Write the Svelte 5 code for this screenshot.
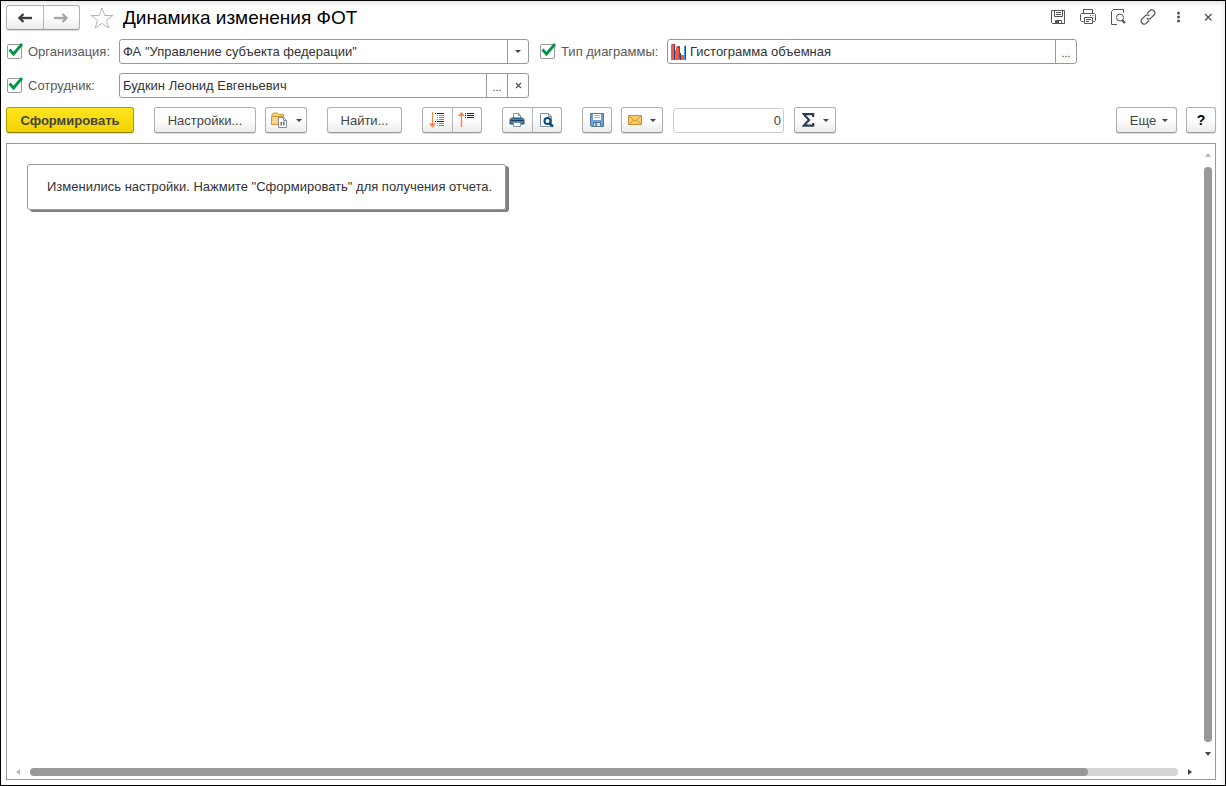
<script lang="ts">
  let useOrganization = $state(true);
  let useEmployee = $state(true);
  let useChartType = $state(true);

  let organization = $state('ФА "Управление субъекта федерации"');
  let employee = $state("Будкин Леонид Евгеньевич");
  let chartType = $state("Гистограмма объемная");
  let total = $state("0");
</script>

{#snippet tick()}
  <svg class="tick" width="17" height="16" viewBox="0 0 17 16" aria-hidden="true">
    <path d="M2.500 6.500 L6.500 11 L15 1" fill="none" stroke="#009646" stroke-width="2.8" />
  </svg>
{/snippet}

{#snippet caret()}
  <svg class="caret" width="6" height="3" viewBox="0 0 6 3" aria-hidden="true">
    <path d="M0 0h6L3 3z" fill="#444" />
  </svg>
{/snippet}

<div class="window">
  <header class="title-bar">
    <div class="group nav">
      <button aria-label="Назад">
        <svg width="14" height="10" viewBox="0 0 14 10">
          <path d="M14 5H3" stroke="#404040" stroke-width="2.4" />
          <path d="M5.500 1L1.500 5l4 4" fill="none" stroke="#404040" stroke-width="2.400" />
        </svg>
      </button>
      <button aria-label="Вперед">
        <svg width="14" height="10" viewBox="0 0 14 10">
          <path d="M0 5h11" stroke="#a6a6a6" stroke-width="2.4" />
          <path d="M8.500 1l4 4-4 4" fill="none" stroke="#a6a6a6" stroke-width="2.400" />
        </svg>
      </button>
    </div>
    <button class="plain star" aria-label="В избранное">
      <svg width="24" height="22" viewBox="0 0 24 22">
        <path d="M12 1l2.700 7.500H23l-6.600 4.900 2.500 7.700L12 16.400l-6.900 4.700 2.500-7.700L1 8.500h8.300z" fill="#fff" stroke="#b0b6ba" />
      </svg>
    </button>
    <h1>Динамика изменения ФОТ</h1>
    <div class="window-tools">
      <button class="plain" aria-label="Сохранить">
        <svg width="16" height="16" viewBox="0 0 16 16" fill="none" stroke="#555">
          <path d="M1.500 1.500h13v13h-12l-1-1z" />
          <path d="M4.500 1.500v6h8v-6M6 3.500h5M6 5.500h5M5.500 14.500v-3h6v3" />
          <path d="M6 12h3v2H6z" fill="#555" stroke="none" />
        </svg>
      </button>
      <button class="plain" aria-label="Печать">
        <svg width="16" height="16" viewBox="0 0 16 16" fill="none" stroke="#555">
          <path d="M3.500 4.500v-4h9v4M3.500 12.500h-2l-1-1v-6l1-1h13l1 1v6l-1 1h-2" />
          <path d="M4.500 8.500h8v6h-8zM6 10.500h5M6 12.500h3M10 6.500h1M12.500 6.500h1" />
        </svg>
      </button>
      <button class="plain" aria-label="Предварительный просмотр">
        <svg width="16" height="16" viewBox="0 0 16 16" fill="none" stroke="#555">
          <path d="M13.500 4V.5h-10l-2 2v13H7" />
          <circle cx="10" cy="8.500" r="3.500" />
          <path d="M12 11l3 3" stroke-width="2.4" />
        </svg>
      </button>
      <button class="plain" aria-label="Получить ссылку">
        <svg width="16" height="16" viewBox="0 0 16 16" fill="none" stroke="#555" stroke-width="1.2">
          <path d="M7 4.500l2.600-2.600a2.900 2.900 0 0 1 4.400 4.100l-3.200 3.200a2.900 2.900 0 0 1-4.100 0" />
          <path d="M9 11.500l-2.600 2.600a2.900 2.900 0 0 1-4.400-4.100l3.200-3.200a2.900 2.900 0 0 1 4.100 0" />
        </svg>
      </button>
      <button class="plain" aria-label="Действия">
        <svg width="16" height="16" viewBox="0 0 16 16" fill="#555">
          <circle cx="8.500" cy="4" r="1.500" />
          <circle cx="8.500" cy="8" r="1.500" />
          <circle cx="8.500" cy="12" r="1.500" />
        </svg>
      </button>
      <button class="plain" aria-label="Закрыть">
        <svg width="16" height="16" viewBox="0 0 16 16">
          <path d="M5 5l6.500 6.500M11.500 5L5 11.500" stroke="#444" stroke-width="1.1" />
        </svg>
      </button>
    </div>
  </header>

  <section class="filters">
    <div class="caption">
      <span class="check">
        <input id="use-org" type="checkbox" bind:checked={useOrganization} />
        {#if useOrganization}{@render tick()}{/if}
      </span>
      <label for="use-org">Организация:</label>
    </div>
    <div class="field">
      <input type="text" aria-label="Организация" bind:value={organization} />
      <button aria-label="Выбрать из списка">{@render caret()}</button>
    </div>

    <div class="caption second">
      <span class="check">
        <input id="use-chart" type="checkbox" bind:checked={useChartType} />
        {#if useChartType}{@render tick()}{/if}
      </span>
      <label for="use-chart">Тип диаграммы:</label>
    </div>
    <div class="field">
      <svg class="chart-icon" width="16" height="16" viewBox="0 0 16 16" aria-hidden="true">
        <path d="M0 1h3v15H0zM5 4h3v12H5zM10 11h3v5h-3z" fill="#f5564a" />
        <path d="M0 1l1-1h3v1zM5 4l1-2h3v2z" fill="#d23a34" />
        <path d="M8 3h1v12l-1 1z" fill="#b92a25" />
        <path d="M3 1h1v15H3zM9 9h1v7H9z" fill="#1c4c76" />
        <path d="M4 6h1v10H4zM13 2h2v14h-2z" fill="#4d9bd0" />
        <path d="M15 1v14l-1 1V2z" fill="#1c4c76" />
      </svg>
      <input type="text" aria-label="Тип диаграммы" bind:value={chartType} />
      <button class="dots" aria-label="Выбрать тип диаграммы">...</button>
    </div>

    <div class="caption">
      <span class="check">
        <input id="use-employee" type="checkbox" bind:checked={useEmployee} />
        {#if useEmployee}{@render tick()}{/if}
      </span>
      <label for="use-employee">Сотрудник:</label>
    </div>
    <div class="field">
      <input type="text" aria-label="Сотрудник" bind:value={employee} />
      <button class="dots" aria-label="Выбрать сотрудника">...</button>
      <button aria-label="Очистить" onclick={() => (employee = "")}>
        <svg width="7" height="7" viewBox="0 0 7 7">
          <path d="M1 1l5 5M6 1L1 6" stroke="#555" stroke-width="1.2" />
        </svg>
      </button>
    </div>
  </section>

  <div class="toolbar">
    <button class="btn primary">Сформировать</button>
    <button class="btn settings">Настройки...</button>
    <button class="btn menu" aria-label="Варианты отчета">
      <svg width="17" height="17" viewBox="0 0 17 17">
        <path d="M1 12.500V2.500L2.500 1h4L8 2.500h4.500V5" fill="#f7cf6c" stroke="#d09a3c" />
        <path d="M.5 4.500h12v8H.5z" fill="#f9d684" stroke="#d09a3c" />
        <path d="M7.500 5.500h5l3 3v7h-8z" fill="#fff" stroke="#7d8f9d" />
        <path d="M12.500 5.500v3h3" fill="none" stroke="#7d8f9d" />
        <path d="M9.500 10h1.500v3.500H9.500z" fill="#e8392c" />
        <path d="M12 9.500h1.500v4H12z" fill="#2e9a57" />
      </svg>
      {@render caret()}
    </button>
    <button class="btn find">Найти...</button>
    <div class="group pair">
      <button aria-label="Развернуть группы">
        <svg width="18" height="18" viewBox="0 0 18 18">
          <path d="M4.500 1v14" stroke="#ff8040" />
          <path d="M1 12.500h7l-3.500 4z" fill="#ff8040" />
          <path d="M7 2.500h1M9 2.500h7M7 10.500h1M9 10.500h7" stroke="#222" />
          <path d="M9 4.500h1M11 4.500h5M9 6.500h1M11 6.500h5M9 8.500h1M11 8.500h5M9 12.500h1M11 12.500h5M9 14.500h1M11 14.500h5" stroke="#888" />
        </svg>
      </button>
      <button aria-label="Свернуть группы">
        <svg width="18" height="18" viewBox="0 0 18 18">
          <path d="M3.500 4v12" stroke="#ff8040" stroke-width="1.4" />
          <path d="M0 5h7L3.500 1z" fill="#ff8040" />
          <path d="M7 2.500h1M9 2.500h7M7 4.500h1M9 4.500h7M7 6.500h1M9 6.500h7" stroke="#222" />
        </svg>
      </button>
    </div>
    <div class="group pair">
      <button aria-label="Печать">
        <svg width="16" height="16" viewBox="0 0 16 16">
          <path d="M4.500 7V1.500h5l2 2V7" fill="#fff" stroke="#7b93a5" />
          <path d="M9.500 1.500v2h2" fill="none" stroke="#7b93a5" />
          <path d="M2.500 6h11L15 7.500V12H1V7.500z" fill="#4681ae" stroke="#244f73" />
          <path d="M2 8.500h12" stroke="#173d5c" />
          <path d="M4.500 10.500h7v4h-7z" fill="#fff" stroke="#7b93a5" />
        </svg>
      </button>
      <button aria-label="Просмотр">
        <svg width="16" height="16" viewBox="0 0 16 16">
          <path d="M1.500 14.500V1.500h8l3 3v10z" fill="#fff" stroke="#7b93a5" />
          <path d="M9.500 1.500v3h3" fill="none" stroke="#7b93a5" />
          <circle cx="8.500" cy="9" r="3" fill="#fff" stroke="#0b4a78" stroke-width="2" />
          <path d="M10.500 11.500l3.500 3" stroke="#0b4a78" stroke-width="2.500" />
        </svg>
      </button>
    </div>
    <button class="btn icon" aria-label="Сохранить отчет">
      <svg width="14" height="15" viewBox="0 0 14 15">
        <path d="M.5.5h13v13h-12l-1-1z" fill="#6da0cc" stroke="#4d7ba3" />
        <path d="M3 1h8v6H3z" fill="#fff" />
        <path d="M4 2.500h6M4 4.500h6" stroke="#a5b2bc" />
        <path d="M3.500 9.500h7v4h-7z" fill="#dce3e8" stroke="#4d7ba3" />
        <path d="M5 10h2v3H5z" fill="#7c8790" />
      </svg>
    </button>
    <button class="btn menu" aria-label="Отправить по почте">
      <svg width="14" height="11" viewBox="0 0 14 11">
        <path d="M.5.5h13v9H.5z" fill="#f9cd6d" stroke="#cf8f2e" />
        <path d="M1 1l6 5 6-5M1 9.500l4.500-4.500M13 9.500L8.500 5" fill="none" stroke="#cf8f2e" />
      </svg>
      {@render caret()}
    </button>
    <input class="total" type="text" aria-label="Сумма" bind:value={total} />
    <button class="btn menu sum" aria-label="Показатель">
      <svg width="13" height="14" viewBox="0 0 13 14">
        <path d="M11.200 4V1.200H1.800L7 7l-5.200 5.700h9.400V10" fill="none" stroke="#2c4056" stroke-width="2.200" />
      </svg>
      {@render caret()}
    </button>
    <button class="btn menu more">Еще {@render caret()}</button>
    <button class="btn help" aria-label="Справка">?</button>
  </div>

  <main class="report">
    <div class="sheet">
      <p class="notice">Изменились настройки. Нажмите "Сформировать" для получения отчета.</p>
    </div>
    <div class="scroll vertical">
      <svg width="6" height="4" viewBox="0 0 6 4"><path d="M0 4h6L3 0z" fill="#b8b8b8" /></svg>
      <div class="track"><div class="thumb" style="height: 100%"></div></div>
      <svg width="6" height="4" viewBox="0 0 6 4"><path d="M0 0h6L3 4z" fill="#444" /></svg>
    </div>
    <div class="scroll horizontal">
      <svg width="4" height="6" viewBox="0 0 4 6"><path d="M4 0v6L0 3z" fill="#b8b8b8" /></svg>
      <div class="track"><div class="thumb" style="width: 92.200%"></div></div>
      <svg width="4" height="6" viewBox="0 0 4 6"><path d="M0 0v6l4-3z" fill="#444" /></svg>
    </div>
  </main>
</div>

<style>
  :global(body) {
    margin: 0;
    background: #fff;
  }
  .window {
    box-sizing: border-box;
    display: flex;
    flex-direction: column;
    min-height: 100vh;
    padding: 4px 9px 5px 5px;
    border: 1px solid #000;
    background: #fff;
    box-shadow: inset 0 5px 4px -2px #e8e8e8, inset -4px 0 4px -2px #eee;
    font-family: "Liberation Sans", Arial, sans-serif;
    font-size: 13px;
    color: #333;
  }
  button,
  input {
    box-sizing: border-box;
    margin: 0;
    font: inherit;
    color: inherit;
  }
  button {
    display: flex;
    align-items: center;
    justify-content: center;
    padding: 0;
    cursor: pointer;
  }
  svg {
    flex: none;
  }

  .title-bar {
    display: flex;
    align-items: center;
    height: 25px;
  }
  .plain {
    border: 0;
    background: none;
  }
  .star {
    margin-left: 10px;
  }
  h1 {
    margin: 0 0 0 9px;
    font-size: 19px;
    font-weight: normal;
    line-height: 24px;
    color: #000;
  }
  .window-tools {
    display: flex;
    gap: 14px;
    margin-left: auto;
    padding-bottom: 2px;
  }

  .btn,
  .group {
    border: 1px solid #b0b0b0;
    border-bottom-color: #999;
    border-radius: 3px;
    background: linear-gradient(#fff 45%, #ececec);
    box-shadow: 0 1px 1px #ddd;
  }
  .group {
    box-sizing: border-box;
    display: flex;
  }
  .group button {
    flex: 1;
    border: 0;
    background: none;
  }
  .group button + button {
    border-left: 1px solid #b8b8b8;
  }
  .nav {
    width: 74px;
    height: 25px;
  }

  .filters {
    display: grid;
    grid-template-columns: 113px minmax(0, 410px) 138px minmax(0, 410px);
    gap: 9px 0;
    margin-top: 9px;
  }
  .caption {
    display: flex;
    align-items: center;
    gap: 6px;
    padding-left: 1px;
    color: #595959;
    white-space: nowrap;
  }
  .caption.second {
    padding-left: 11px;
  }
  .check {
    position: relative;
    display: flex;
  }
  .check input {
    appearance: none;
    width: 15px;
    height: 15px;
    border: 1px solid #999;
    border-radius: 2px;
    background: #fff;
  }
  .tick {
    position: absolute;
    left: 0;
    top: -1px;
    pointer-events: none;
  }
  .field {
    box-sizing: border-box;
    display: flex;
    align-items: stretch;
    height: 25px;
    border: 1px solid #999;
    border-radius: 3px;
    background: #fff;
  }
  .field input {
    flex: 1;
    min-width: 0;
    padding: 0 3px;
    border: 0;
    background: none;
    outline: none;
  }
  .field button {
    width: 21px;
    border: 0;
    border-left: 1px solid #999;
    background: none;
  }
  .field .dots {
    font-size: 11px;
    padding-top: 3px;
  }
  .chart-icon {
    align-self: center;
    margin-left: 3px;
  }

  .toolbar {
    display: flex;
    align-items: center;
    gap: 20px;
    margin-top: 9px;
    color: #444;
  }
  .btn {
    height: 26px;
  }
  .primary {
    width: 128px;
    border-color: #b39b00;
    border-bottom-color: #8f7c00;
    background: linear-gradient(#ffe51f, #f2d300);
    font-weight: bold;
  }
  .settings {
    width: 102px;
  }
  .menu {
    gap: 8px;
    width: 42px;
    margin-left: -11px;
  }
  .find {
    width: 75px;
  }
  .pair {
    width: 60px;
    height: 26px;
  }
  .icon {
    width: 30px;
  }
  .total {
    width: 111px;
    height: 25px;
    margin-left: -10px;
    padding: 0 2px;
    border: 1px solid #ccc;
    border-radius: 3px;
    text-align: right;
  }
  .sum {
    margin-left: -10px;
  }
  .more {
    width: 61px;
    margin-left: auto;
    padding-left: 5px;
    gap: 6px;
  }
  .help {
    width: 30px;
    margin-left: -11px;
    font-size: 14px;
    font-weight: bold;
    color: #000;
  }

  .report {
    display: grid;
    grid-template-columns: 1fr 15px;
    grid-template-rows: 1fr 15px;
    flex: 1;
    margin-top: 10px;
    border: 1px solid #999;
  }
  .sheet {
    padding: 20px;
  }
  .notice {
    width: fit-content;
    margin: 0;
    padding: 14px 13px 14px 19px;
    border: 1px solid #999;
    border-radius: 3px;
    line-height: 16px;
    box-shadow: 3px 2px 0 #808080;
  }
  .scroll {
    display: flex;
    align-items: center;
  }
  .vertical {
    flex-direction: column;
    gap: 10px;
    padding: 9px 0 8px;
  }
  .horizontal {
    gap: 10px;
    padding: 0 8px 0 9px;
  }
  .track {
    flex: 1;
    border-radius: 4px;
    background: #d4d4d4;
  }
  .vertical .track {
    width: 8px;
  }
  .horizontal .track {
    height: 8px;
  }
  .thumb {
    height: 100%;
    border-radius: 4px;
    background: #999;
  }
</style>
